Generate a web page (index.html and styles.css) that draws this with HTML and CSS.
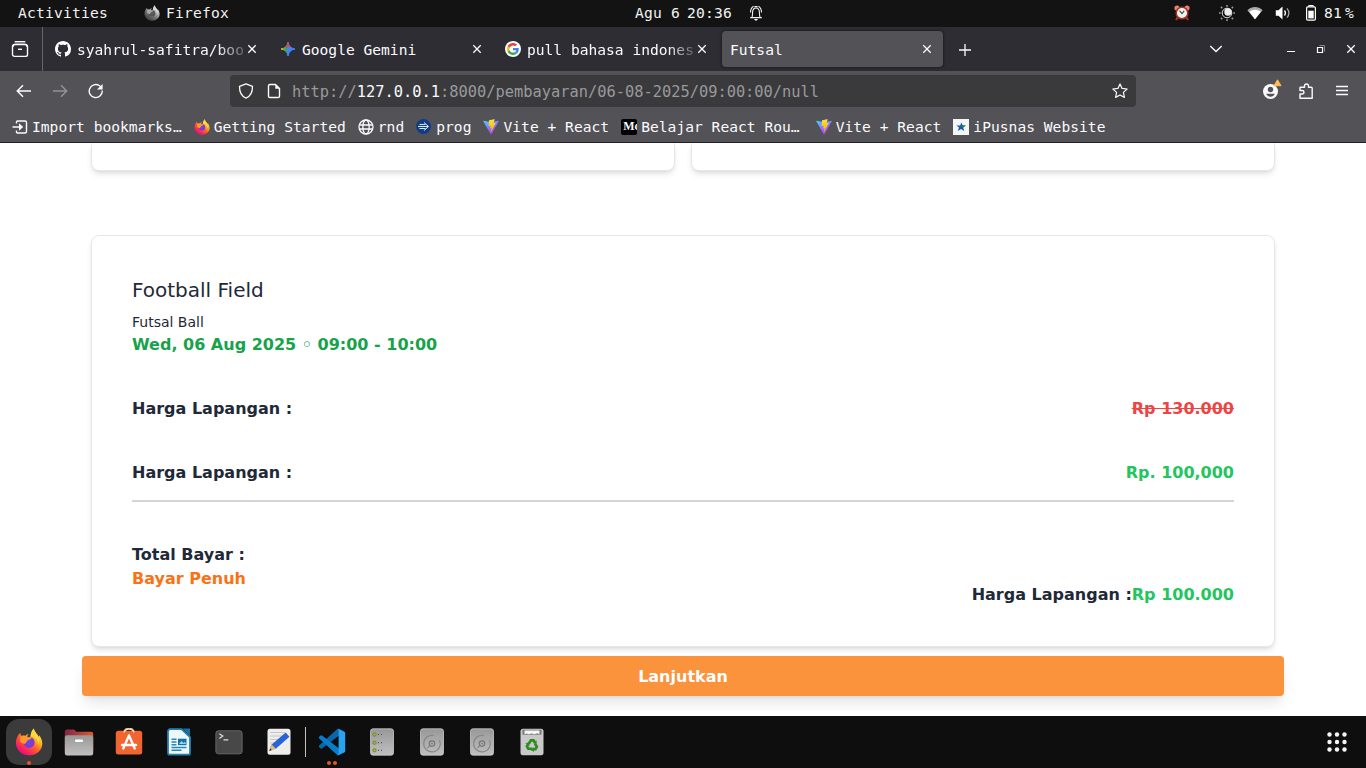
FILE: index.html
```html
<!DOCTYPE html>
<html lang="id">
<head>
<meta charset="utf-8">
<title>Futsal</title>
<link rel="stylesheet" href="styles.css">
</head>
<body>
<svg class="defs" width="0" height="0">
  <defs>
    <linearGradient id="fx" x1=".85" y1=".1" x2=".2" y2="1"><stop offset="0" stop-color="#fff04a"/><stop offset=".3" stop-color="#ffb01f"/><stop offset=".55" stop-color="#ff5a30"/><stop offset=".85" stop-color="#f5156c"/><stop offset="1" stop-color="#e01595"/></linearGradient>
    <radialGradient id="fxc"><stop offset="0" stop-color="#5b50e8"/><stop offset="1" stop-color="#8b32d0"/></radialGradient>
    <linearGradient id="va" x1="0" y1="0" x2=".6" y2="1"><stop offset="0" stop-color="#41d1ff"/><stop offset="1" stop-color="#bd34fe"/></linearGradient>
    <linearGradient id="vb" x1="0" y1="0" x2="0" y2="1"><stop offset="0" stop-color="#ffea83"/><stop offset=".1" stop-color="#ffdd35"/><stop offset="1" stop-color="#ffa800"/></linearGradient>
    <linearGradient id="gray" x1="0" y1="0" x2="0" y2="1"><stop offset="0" stop-color="#989898"/><stop offset="1" stop-color="#c0c0c0"/></linearGradient>
    <linearGradient id="folder" x1="0" x2="1"><stop offset="0" stop-color="#7d2648"/><stop offset="1" stop-color="#e2592c"/></linearGradient>
    <linearGradient id="gem" x1="0" x2="1"><stop offset="0" stop-color="#fbbc04"/><stop offset=".3" stop-color="#34a853"/><stop offset=".5" stop-color="#4285f4"/><stop offset="1" stop-color="#3186ff"/></linearGradient>
    <symbol id="firefox" viewBox="0 0 28 28">
      <path fill="url(#fx)" d="M2.2 9.2C3.2 7 4.2 6 5.4 4.8c0 1.3.3 2.2 1 3 1.3-.4 2.7-.3 3.8.2 1-1.4 2.2-2 3.6-2.1-1.2 1.2-1.6 2-1.5 3.2h3.2c.2-3.2 1-6 3.2-8.6.7 2.7 2 4.2 3.5 5.9.8.9 1.3 1.9 1.7 3 .3-.8.3-1.5.1-2.5 2.1 2.7 3.3 5.5 3.3 8.7C27.300 22.300 21.600 27.400 14.300 27.400 6.800 27.400.9 21.900.9 14.800c0-2.100.4-3.900 1.300-5.600z"/>
      <circle cx="14" cy="14.400" r="5.600" fill="url(#fxc)"/>
      <path fill="#ff9a2a" d="M5.400 9c2.300-1.800 5.200-1.500 7.300.3h4c-.2 1.600-1.200 2.200-3 2.500-.9.200-1.100 1.200-2.400 2.100-.3 1.600-1.700 2-3.300 1.600C5 14.600 4.700 11.600 5.400 9z"/>
      <path fill="#ffd83c" d="M18.700.5c.7 2.700 2 4.200 3.500 5.900 2.700 3.200 2.700 7.200 1 10.300.2-3.400-1.200-5.700-3.600-7.300-1.300-.8-2.600-.9-4.100-.3.200-3.200 1-6 3.200-8.600z"/>
    </symbol>
    <symbol id="vite" viewBox="0 0 410 404">
      <path fill="url(#va)" d="M399.641 59.525 215.643 388.545C211.844 395.338 202.084 395.378 198.228 388.618L10.582 59.556C6.381 52.190 12.680 43.267 21.028 44.759L205.223 77.682C206.398 77.892 207.601 77.890 208.776 77.676L389.119 44.806C397.439 43.289 403.768 52.143 399.641 59.525Z"/>
      <path fill="url(#vb)" d="M292.965 1.574 156.801 28.255C154.563 28.694 152.906 30.590 152.771 32.866L144.395 174.330C144.198 177.662 147.258 180.248 150.510 179.498L188.420 170.749C191.967 169.931 195.172 173.055 194.443 176.622L183.180 231.775C182.422 235.487 185.907 238.661 189.532 237.560L212.947 230.446C216.577 229.344 220.065 232.527 219.297 236.242L201.398 322.875C200.278 328.294 207.486 331.249 210.492 326.603L212.500 323.500 323.454 102.072C325.312 98.365 322.108 94.137 318.036 94.923L279.014 102.454C275.347 103.161 272.227 99.746 273.262 96.158L298.731 7.867C299.767 4.273 296.636.855 292.965 1.574Z"/>
    </symbol>
    <symbol id="x" viewBox="0 0 16 16"><path d="m4.300 4.300 7.400 7.400m0-7.400-7.400 7.400" fill="none" stroke="#fbfbfe" stroke-width="1.300"/></symbol>
    <symbol id="disk" viewBox="0 0 28 28">
      <rect x="2.500" y=".8" width="23" height="26.400" rx="2.500" fill="url(#gray)" stroke="#c9c9c9" stroke-width=".8"/>
      <path d="M21.500 12a8.300 8.300 0 1 1-5.500-4.500M9.300 20.200l2.700-2.700" fill="none" stroke="#868686" stroke-width="1.100"/>
      <circle cx="14" cy="15.600" r="2.700" fill="none" stroke="#777" stroke-width="1.200"/><circle cx="14" cy="15.600" r=".8" fill="#777"/>
    </symbol>
  </defs>
</svg>

<header class="topbar">
  <div class="top-left">
    <span class="activities">Activities</span>
    <svg class="i16 gray-fox"><use href="#firefox"/></svg>
    <span>Firefox</span>
  </div>
  <div class="clock"><span>Agu</span><span>6</span><span>20:36</span>
    <svg class="i16 bell" viewBox="0 0 16 16"><g fill="none" stroke="#f2f2f2" stroke-width="1.100"><path d="M2.200 12.600h11.600M3.900 12.500c.8-1.500.5-3.500.7-5.500C4.800 4.500 6 3 8 3s3.200 1.500 3.400 4c.2 2-.1 4 .7 5.500M2.500 7.500c0-3 1-5 3-6.200M13.500 7.500c0-3-1-5-3-6.200M7 2.300V1.500h2v.8"/></g><path d="M5.800 14h4.400L8 16z" fill="#f2f2f2"/></svg>
  </div>
  <div class="tray">
    <svg class="i16 alarm" viewBox="0 0 16 16"><path d="m4 12-2 3m10-3 2 3" stroke="#ad3327" stroke-width="2.200"/><circle cx="3" cy="3" r="2.600" fill="#ee806e"/><circle cx="13" cy="3" r="2.600" fill="#ee806e"/><circle cx="8" cy="8" r="5.800" fill="#f3f3ef" stroke="#a43528" stroke-width="1.500"/><path d="m5.500 5.700 2.500 3 2.200-2.800" fill="none" stroke="#444" stroke-width="1.100"/></svg>
    <svg class="i16 sun" viewBox="0 0 16 16"><circle cx="8" cy="8" r="4.800" fill="none" stroke="#ddd"/><circle cx="9" cy="7" r="3.700" fill="#eee"/><g fill="#999"><path d="M7.200 0h1.600v1.700H7.200zM7.200 14.300h1.600V16H7.200zM0 7.200h1.700v1.600H0zM14.300 7.200H16v1.600h-1.700z"/><circle cx="2.600" cy="2.600" r="1"/><circle cx="13.400" cy="2.600" r="1"/><circle cx="2.600" cy="13.400" r="1"/><circle cx="13.400" cy="13.400" r="1"/></g></svg>
    <svg class="i16 wifi" viewBox="0 0 16 16"><path d="M.4 5.200C5 1 11 1 15.600 5.200L8 14.300z" fill="#aaa"/><path d="M2.300 6.800C5.500 4 10.500 4 13.700 6.800L8 14.300z" fill="#fff"/></svg>
    <svg class="i16 sound" viewBox="0 0 16 16"><path d="M.8 5.200h2.700l4-3.700v13l-4-3.700H.8z" fill="#fff"/><path d="M9.500 5.500q2 2.500 0 5" fill="none" stroke="#fff" stroke-width="1.300"/><path d="M12 3.300q3.800 4.700 0 9.400" fill="none" stroke="#aaa" stroke-width="1.200"/></svg>
    <svg class="battery" viewBox="0 0 10 16"><path d="M3 1.600V.6h4v1" fill="none" stroke="#fff" stroke-width="1.200"/><rect x=".6" y="1.900" width="8.800" height="13.300" rx="1.200" fill="none" stroke="#fff" stroke-width="1.200"/><path d="M2.300 5.700h5.400v7.700H2.300z" fill="#fff"/></svg>
    <span class="percent">81<span>%</span></span>
  </div>
</header>

<nav class="tabs">
  <div class="recent"><svg width="18" height="18" viewBox="0 0 18 18" fill="none" stroke="#fbfbfe" stroke-width="1.400"><path d="M3.700 1.700h10.600"/><path d="M2 6.800Q2 4.300 4.300 4.300h9.400Q16 4.300 16 6.800"/><rect x="1.500" y="4.600" width="15" height="11.800" rx="2"/><path d="M7 9.300h4"/></svg></div>
  <div class="tab"><svg class="i16" viewBox="0 0 16 16"><path fill="#fff" d="M8 0C3.580 0 0 3.580 0 8c0 3.540 2.290 6.530 5.470 7.590.4.070.55-.17.55-.38 0-.19-.01-.82-.01-1.490-2.010.37-2.530-.49-2.690-.94-.09-.23-.48-.94-.82-1.130-.28-.15-.68-.52-.01-.53.63-.01 1.080.58 1.230.82.72 1.210 1.870.87 2.330.66.07-.52.28-.87.51-1.070-1.780-.2-3.640-.89-3.640-3.950 0-.87.31-1.590.82-2.150-.08-.2-.36-1.020.08-2.120 0 0 .67-.21 2.200.82.64-.18 1.320-.27 2-.27s1.360.09 2 .27c1.530-1.040 2.200-.82 2.200-.82.44 1.100.16 1.920.08 2.120.51.56.82 1.270.82 2.150 0 3.070-1.870 3.750-3.650 3.950.29.25.54.73.54 1.480 0 1.070-.01 1.930-.01 2.200 0 .21.15.46.55.38A8.013 8.013 0 0 0 16 8c0-4.420-3.580-8-8-8z"/></svg><span class="title fade">syahrul-safitra/boo</span><svg class="i16"><use href="#x"/></svg></div>
  <div class="tab"><svg class="i16" viewBox="0 0 16 16"><path d="M8 1Q9 7 15 8 9 9 8 15 7 9 1 8 7 7 8 1z" fill="url(#gem)" stroke="url(#gem)"/><path d="M8 .5Q8.600 3.500 10 5.500L8 6.500 5.500 6.500Q7.500 4.500 8 .5z" fill="#ea4335"/></svg><span class="title">Google Gemini</span><svg class="i16"><use href="#x"/></svg></div>
  <div class="tab"><svg class="i16" viewBox="0 0 48 48"><circle cx="24" cy="24" r="24" fill="#fff"/><g transform="translate(6 6) scale(.75)"><path fill="#EA4335" d="M24 9.500c3.540 0 6.710 1.220 9.210 3.600l6.850-6.850C35.900 2.380 30.470 0 24 0 14.620 0 6.510 5.380 2.560 13.220l7.980 6.190C12.430 13.720 17.740 9.500 24 9.500z"/><path fill="#4285F4" d="M46.980 24.550c0-1.570-.15-3.090-.38-4.550H24v9.020h12.940c-.58 2.960-2.260 5.480-4.780 7.180l7.730 6c4.510-4.180 7.090-10.360 7.090-17.650z"/><path fill="#FBBC05" d="M10.530 28.590c-.48-1.450-.76-2.990-.76-4.590s.27-3.140.76-4.590l-7.980-6.190C.92 16.460 0 20.120 0 24s.92 7.540 2.560 10.780l7.970-6.190z"/><path fill="#34A853" d="M24 48c6.480 0 11.930-2.130 15.890-5.810l-7.730-6c-2.150 1.450-4.920 2.300-8.160 2.300-6.260 0-11.570-4.220-13.470-9.910l-7.980 6.190C6.510 42.620 14.620 48 24 48z"/></g></svg><span class="title fade">pull bahasa indones</span><svg class="i16"><use href="#x"/></svg></div>
  <div class="tab active"><span class="title">Futsal</span><svg class="i16"><use href="#x"/></svg></div>
  <svg class="i16 plus" viewBox="0 0 16 16"><path d="M8 2v12M2 8h12" stroke="#fbfbfe" stroke-width="1.300"/></svg>
  <div class="win">
    <svg class="i16 chev" viewBox="0 0 16 16"><path d="m2.300 5 5.700 5.500L13.700 5" fill="none" stroke="#fbfbfe" stroke-width="1.400"/></svg>
    <svg class="i16" viewBox="0 0 16 16"><path d="M4 10.500h8" stroke="#fff"/></svg>
    <svg class="i16" viewBox="0 0 16 16"><path d="M6.500 4.500h5v6" fill="none" stroke="#888"/><path d="M4.500 6.500h5v5h-5z" fill="none" stroke="#fff" stroke-width="1.200"/></svg>
    <svg class="i16"><use href="#x"/></svg>
  </div>
</nav>

<div class="toolbar">
  <svg class="i16" viewBox="0 0 16 16" fill="none" stroke="#fbfbfe" stroke-width="1.500"><path d="M15 8H1.500M7 2.300 1.300 8 7 13.700"/></svg>
  <svg class="i16" viewBox="0 0 16 16" fill="none" stroke="#919196" stroke-width="1.500"><path d="M1 8h13.500M9 2.300 14.700 8 9 13.700"/></svg>
  <svg class="i16" viewBox="0 0 16 16" fill="none" stroke="#fbfbfe" stroke-width="1.400"><path d="M14.200 7.500A6.500 6.500 0 1 1 11.500 2.800l1.500 1.200"/><path d="M14.600 1v5.500H9z" fill="#fbfbfe" stroke="none"/></svg>
  <div class="urlbar">
    <svg class="i16" viewBox="0 0 16 16" fill="none" stroke="#fbfbfe" stroke-width="1.300"><path d="M8 .9 14.500 3.300c.1 5.700-1.700 10-6.500 11.800C3.200 13.300 1.400 9 1.500 3.300z" stroke-linejoin="round"/></svg>
    <svg class="i16" viewBox="0 0 16 16" fill="none" stroke="#fbfbfe" stroke-width="1.400"><path d="M9.500 1.500H4Q2.500 1.500 2.500 3v10.200q0 1.300 1.500 1.300h8q1.500 0 1.500-1.300V5.500z" stroke-linejoin="round"/><path d="M9.300 1.300v4.500h4.500z" fill="#fbfbfe" stroke="none"/></svg>
    <span class="url">http://<b>127.0.0.1</b>:8000/pembayaran/06-08-2025/09:00:00/null</span>
    <svg class="i16" viewBox="0 0 16 16" fill="none" stroke="#fbfbfe" stroke-width="1.200"><path d="m8 .9 2.100 4.500 5 .6-3.700 3.400 1 5L8 12l-4.400 2.400 1-5L.9 6l5-.6z" stroke-linejoin="round"/></svg>
  </div>
  <div class="tools">
    <svg class="account" width="20" height="22" viewBox="0 0 20 22"><circle cx="8.500" cy="13.500" r="7.500" fill="#fbfbfe"/><circle cx="8.500" cy="11.500" r="2.700" fill="#535257"/><path d="M4.100 15.700h8.800Q11.500 18.700 8.500 18.700t-4.400-3z" fill="#535257"/><path d="M15.500 1.800 12.100 7.700h6.900z" fill="#ffbd4f" stroke="#ffbd4f" stroke-linejoin="round"/></svg>
    <svg class="i16" viewBox="0 0 16 16" fill="none" stroke="#fbfbfe" stroke-width="1.400"><path d="M2 15.300V11h2.200a1.700 1.700 0 0 0 0-3.500H2V4.800Q2 4.300 2.500 4.300h4V3a2 2 0 0 1 4 0v1.300h2.700q1 0 1 1v10z" stroke-linejoin="round"/></svg>
    <svg class="i16" viewBox="0 0 16 16" stroke="#fbfbfe" stroke-width="1.300"><path d="M2 3.500h12M2 7.500h12M2 11.500h12"/></svg>
  </div>
</div>

<div class="bookmarks">
  <div class="bm"><svg class="i16" viewBox="0 0 16 16" fill="none" stroke="#fbfbfe" stroke-width="1.400"><path d="M4.500 4.500V3Q4.500 2 5.500 2H13q1.500 0 1.500 1.500v9q0 1.500-1.500 1.500H5.500q-1 0-1-1v-1.500M.5 8h8"/><path d="m7 4.300 4.200 3.700L7 11.700z" fill="#fbfbfe" stroke="none"/></svg>Import bookmarks…</div>
  <div class="bm"><svg class="i16"><use href="#firefox"/></svg>Getting Started</div>
  <div class="bm"><svg class="i16" viewBox="0 0 16 16" fill="none" stroke="#fbfbfe" stroke-width="1.300"><circle cx="8" cy="8" r="7"/><ellipse cx="8" cy="8" rx="3.200" ry="7"/><path d="M1.300 6h13.400M1.300 10h13.400"/></svg>rnd</div>
  <div class="bm"><svg class="i16" viewBox="0 0 16 16"><circle cx="7.500" cy="7.500" r="7.500" fill="#123c85"/><path d="M2 7.500h10M3.500 5.500h6M3.500 9.500h6M8 3.500l4.500 4L8 11.500" fill="none" stroke="#d8e6ff"/></svg>prog</div>
  <div class="bm"><svg class="i16"><use href="#vite"/></svg>Vite + React</div>
  <div class="bm belajar"><span class="medium">Mc</span>Belajar React Rou…</div>
  <div class="bm"><svg class="i16"><use href="#vite"/></svg>Vite + React</div>
  <div class="bm"><svg class="i16" viewBox="0 0 16 16"><path d="M0 0h16v16H0z" fill="#f5f5f7"/><path d="m8.500 3.500 1 3h3.300l-2.600 2L11.200 12 8 10l-3.200 2 1.200-3.500-2.600-2h3.700z" fill="#1756b6"/><path d="m8.500 3.500 1 3h3.300l-2.600 2-2.700-.5 1.500-1z" fill="#118a3f"/></svg>iPusnas Website</div>
</div>

<main class="page">
  <div class="top-cards"><div class="card stub"></div><div class="card stub"></div></div>
  <section class="card order">
    <h1>Football Field</h1>
    <p class="field">Futsal Ball</p>
    <p class="time">Wed, 06 Aug 2025 ◦ 09:00 - 10:00</p>
    <div class="row"><span>Harga Lapangan :</span><span class="old">Rp 130.000</span></div>
    <div class="row"><span>Harga Lapangan :</span><span class="price">Rp. 100,000</span></div>
    <hr>
    <div class="total">
      <div>Total Bayar :<br><span class="full">Bayar Penuh</span></div>
      <div class="sum">Harga Lapangan :<span class="price">Rp 100.000</span></div>
    </div>
  </section>
  <button class="next">Lanjutkan</button>
</main>

<footer class="dock">
  <div class="app current"><svg class="i28"><use href="#firefox"/></svg><i class="dots"><b></b></i></div>
  <div class="app"><svg class="i28 wide" viewBox="0 0 30 28"><path d="M.8 23V3.500Q.8 1.500 3 1.500h7l2.500 2.200H27q2.200 0 2.200 2V23z" fill="url(#folder)"/><path d="M.8 9q0-1.700 2-1.700H27q2.200 0 2.200 1.700v16.200q0 2.200-2.200 2.200H3q-2.200 0-2.200-2.200z" fill="url(#gray)"/><rect x="11" y="11.500" width="8" height="2.600" rx="1" fill="#fff"/></svg></div>
  <div class="app"><svg class="i28" viewBox="0 0 28 28"><path d="M9 4.500C9-1 19-1 19 4.500" fill="none" stroke="#bca987" stroke-width="1.700"/><rect x=".8" y="2.800" width="26.400" height="23.700" rx="2.500" fill="#f26430"/><path d="M9 4.500Q10 1 14 1t5 3.500" fill="none" stroke="#f5dfba" stroke-width="1.400"/><g fill="none" stroke="#fff" stroke-linecap="round" stroke-width="2.400"><path d="m14 7.500-5.700 13M14 7.500l5.700 13M7 17h14"/></g></svg></div>
  <div class="app"><svg class="i28" viewBox="0 0 28 28"><path d="M4.500 1.200h12l8.500 8V25q0 1.700-1.700 1.700H4.700Q3 26.700 3 25V2.800z" fill="#eef8fc" stroke="#2481b5" stroke-width="1.800"/><path d="M17.500.5H25v7.700z" fill="#16719f"/><path d="M6.500 11.300h5m-5 2.700h5m-5 2.700h5m-5 2.800h15m-15 2.700h10" stroke="#2587b8" stroke-width="1.400"/><path d="M13 10.700h8.500v6.500H13z" fill="#1672a5"/><path d="m14 16 2.500-3 2 2 1.500-1.200 1 2.200z" fill="#9bd5ea"/></svg></div>
  <div class="app"><svg class="i28" viewBox="0 0 28 28"><rect x=".9" y="2.800" width="26.200" height="23" rx="2.500" fill="#484848" stroke="#666"/><path d="m4.300 5.800 3.500 2.300-3.500 2.300M8.500 11.800h4.800" fill="none" stroke="#ddd" stroke-width="1.200"/></svg></div>
  <div class="app"><svg class="i28" viewBox="0 0 28 28"><rect x="2.500" y=".8" width="23" height="26" rx="2.500" fill="#ededeb"/><path d="M5 4.500h15M5 8h14M5 11.500h10M5 15h8M5 18.500h6" stroke="#c8c8c4"/><path d="m4.500 22.500 2.200-6 14-12 3.700 4.300-13.600 12z" fill="#2863d8"/><path d="m6.700 16.500 4.100 4.300-6.300 2.100z" fill="#e9bb78"/><path d="m5.200 20.500 1.600 1.600-2.600.9z" fill="#222"/></svg></div>
  <div class="sep"></div>
  <div class="app"><svg class="i28" viewBox="-3 -3 106 106"><path fill="#0a65a9" d="M96.460 10.800 75.860.88a6.230 6.230 0 0 0-7.100 1.200L1.300 63.600a4.170 4.170 0 0 0 0 6.160l5.500 5a4.170 4.170 0 0 0 5.330.24L93.360 13.400c2.730-2.070 6.640-.12 6.640 3.300v-.24a6.250 6.250 0 0 0-3.540-5.630z"/><path fill="#087dc9" d="m96.460 89.200-20.600 9.920a6.230 6.230 0 0 1-7.100-1.200L1.300 36.400a4.170 4.170 0 0 1 0-6.160l5.500-5a4.170 4.170 0 0 1 5.330-.24L93.360 86.600c2.730 2.070 6.640.12 6.640-3.300v.24a6.250 6.250 0 0 1-3.540 5.630z"/><path fill="#29a3ef" d="M75.860 99.130a6.230 6.230 0 0 1-7.100-1.200c2.300 2.300 6.240.67 6.240-2.600V4.670c0-3.270-3.950-4.900-6.240-2.600a6.230 6.230 0 0 1 7.100-1.200l20.600 9.900A6.250 6.250 0 0 1 100 16.400v67.200a6.250 6.250 0 0 1-3.540 5.640z"/></svg><i class="dots"><b></b><b></b></i></div>
  <div class="app"><svg class="i28" viewBox="0 0 28 28"><rect x="2.500" y=".8" width="23" height="26.400" rx="2.500" fill="url(#gray)" stroke="#c9c9c9" stroke-width=".8"/><g fill="#9abb28" stroke="#697735" stroke-width=".8"><circle cx="6.500" cy="6.500" r="1.700"/><circle cx="6.500" cy="14.700" r="1.700"/><circle cx="6.500" cy="22.300" r="1.700"/></g><path d="M10 6.500h1m2 0h1m-4 8.200h1m2 0h1m-4 7.600h1m2 0h1" stroke="#555" stroke-width="1.200"/></svg></div>
  <div class="app"><svg class="i28"><use href="#disk"/></svg></div>
  <div class="app"><svg class="i28"><use href="#disk"/></svg></div>
  <div class="app"><svg class="i28" viewBox="0 0 28 28"><rect x="2.500" y=".8" width="23" height="26.400" rx="2.500" fill="#c9c9c9"/><path d="M4.500 1.700h19v5h-19z" fill="#777"/><path d="M6.500 2.500h15v3.700l-2-1-3 1-3-.8-3 .8-2-.8-2 .8z" fill="#f6f6f6"/><g transform="translate(0 .5)" fill="none" stroke="#2e8b24" stroke-width="2.700"><g id="arr"><path d="m10.800 15.300 2.100-3.400h2.700l1.300 2"/><path d="m14.800 14.700 3.700.6.200-3.600z" fill="#2e8b24" stroke="none"/></g><use href="#arr" transform="rotate(120 14 16.800)"/><use href="#arr" transform="rotate(240 14 16.800)"/></g></svg></div>
  <svg class="grid" width="20" height="20" viewBox="0 0 20 20" fill="#f5f5f5"><g id="three"><circle cx="2.500" cy="2.500" r="2.200"/><circle cx="10" cy="2.500" r="2.200"/><circle cx="17.500" cy="2.500" r="2.200"/></g><use href="#three" y="7.500"/><use href="#three" y="15"/></svg>
</footer>
</body>
</html>
```
FILE: styles.css
```css
* { box-sizing: border-box; }
body {
  margin: 0; width: 1366px; height: 768px; overflow: hidden;
  display: flex; flex-direction: column; background: #fff;
  font-family: "DejaVu Sans", sans-serif; font-size: 16px; line-height: 24px; color: #1f2937;
}
svg { display: block; flex: none; }
.defs { position: absolute; }
.i16 { width: 16px; height: 16px; }
.i28 { width: 28px; height: 28px; }
.topbar, .tabs, .toolbar, .bookmarks {
  flex: none; display: flex; align-items: center; white-space: nowrap;
  font-family: "DejaVu Sans Mono", monospace; font-size: 14.6px; color: #fbfbfe;
}

/* System bar */
.topbar { height: 27px; padding-bottom: 2px; background: #131313; color: #f2f2f2; letter-spacing: .21px; }
.top-left { width: 635px; padding-left: 18px; display: flex; align-items: center; }
.activities { width: 126px; }
.gray-fox { filter: grayscale(1); margin-right: 6px; }
.clock { width: 539px; display: flex; align-items: center; }
.clock span { margin-right: 7px; }
.clock span:first-child { margin-right: 9px; }
.bell { margin-left: 9px; }
.tray { display: flex; align-items: center; }
.sun { margin-left: 29px; }
.wifi, .sound { margin-left: 12px; }
.battery { width: 10px; height: 16px; margin-left: 15px; }
.percent { margin-left: 8px; }
.percent span { margin-left: 3px; }

/* Tab strip */
.tabs { height: 44px; background: #2e2d33; }
.recent { width: 43px; height: 44px; border-right: 1px solid #66656a; padding-left: 11px; display: flex; align-items: center; margin-right: 4px; }
.tab { width: 221px; height: 36px; margin-right: 4px; padding: 0 8px; display: flex; align-items: center; border-radius: 4px; }
.title { flex: 1; margin-left: 6px; padding-top: 2px; overflow: hidden; }
.tab > .i16 { margin-top: -1px; }
.fade { -webkit-mask-image: linear-gradient(90deg, #000 140px, transparent 175px); mask-image: linear-gradient(90deg, #000 140px, transparent 175px); }
.active { background: #535257; box-shadow: 0 0 3px #111; }
.active .title { margin-left: 0; }
.plus { margin-left: 10px; margin-top: 1px; }
.win { margin-left: auto; padding-right: 7px; display: flex; gap: 14px; }
.chev { margin-right: 45px; }

/* Navigation */
.toolbar { height: 40px; background: #535257; padding-left: 16px; }
.toolbar > .i16 { margin-right: 20px; }
.urlbar { width: 906px; height: 32px; margin-left: 106px; padding: 0 8px; background: #3a3a3c; border-radius: 4px; display: flex; align-items: center; gap: 12px; }
.url { flex: 1; margin-left: -2px; padding-top: 2px; font-size: 15.370px; color: #99999c; }
.url b { font-weight: 400; color: #fbfbfe; }
.tools { margin-left: auto; padding-right: 16px; display: flex; align-items: center; gap: 20px; }
.account { margin-right: -4px; margin-top: -4px; }
.bookmarks { height: 32px; background: #535257; border-bottom: 1px solid #202024; padding-left: 12px; gap: 12px; letter-spacing: .02px; }
.bm { display: flex; align-items: center; gap: 4px; }
.belajar { margin-right: 4px; }
.medium { width: 16px; height: 16px; overflow: hidden; background: #000; border-radius: 2px; padding-left: 2px; font: bold 12px/15px "Liberation Serif", serif; }

/* Checkout page */
.page { flex: 1; min-height: 0; overflow: hidden; padding: 0 82px; }
.card { border: 1px solid #e5e7eb; border-radius: 8px; background: #fff; box-shadow: 0 4px 6px -1px rgba(0,0,0,.1), 0 2px 4px -2px rgba(0,0,0,.1); }
.top-cards { display: flex; gap: 16px; margin: 0 9px; }
.stub { flex: 1; height: 28px; border-top: 0; border-radius: 0 0 8px 8px; }
.order { margin: 64px 9px 0; padding: 40px 40px 39px; font-weight: 700; }
h1 { margin: 0 0 8px; font-size: 20px; line-height: 28px; font-weight: 400; }
p { margin: 0; }
.field { margin-bottom: 1px; font-size: 14px; line-height: 20px; font-weight: 400; }
.time { color: #16a34a; }
.row { display: flex; justify-content: space-between; margin-top: 40px; }
.old { color: #ef4444; text-decoration: line-through; }
.price { color: #22c55e; }
hr { margin: 15px 0 41px; border: 0; border-top: 2px solid #d1d5db; }
.total { display: flex; justify-content: space-between; }
.full { color: #f97316; }
.sum { margin-top: 40px; }
.next { display: block; width: 100%; height: 40px; margin-top: 9px; padding: 2px 0 0; border: 0; border-radius: 4px; background: #fb923c; color: #fff; font: bold 16px/24px "DejaVu Sans", sans-serif; box-shadow: 0 10px 15px -3px rgba(0,0,0,.1), 0 4px 6px -4px rgba(0,0,0,.1); }

/* Dock */
.dock { flex: none; height: 52px; background: #0e0e0e; padding: 0 19px 0 6px; display: flex; align-items: center; }
.app { position: relative; width: 46px; height: 46px; margin-right: 4px; display: flex; align-items: center; justify-content: center; border-radius: 13px; }
.wide { width: 30px; }
.current { background: #3b3b3b; }
.dots { position: absolute; left: 0; right: 0; bottom: 0; display: flex; justify-content: center; gap: 2px; }
.dots b { width: 4px; height: 4px; border-radius: 50%; background: #e95420; }
.sep { width: 1px; height: 30px; background: #c4c4c4; margin: 0 3px 0 -1px; }
.grid { margin-left: auto; }
```
